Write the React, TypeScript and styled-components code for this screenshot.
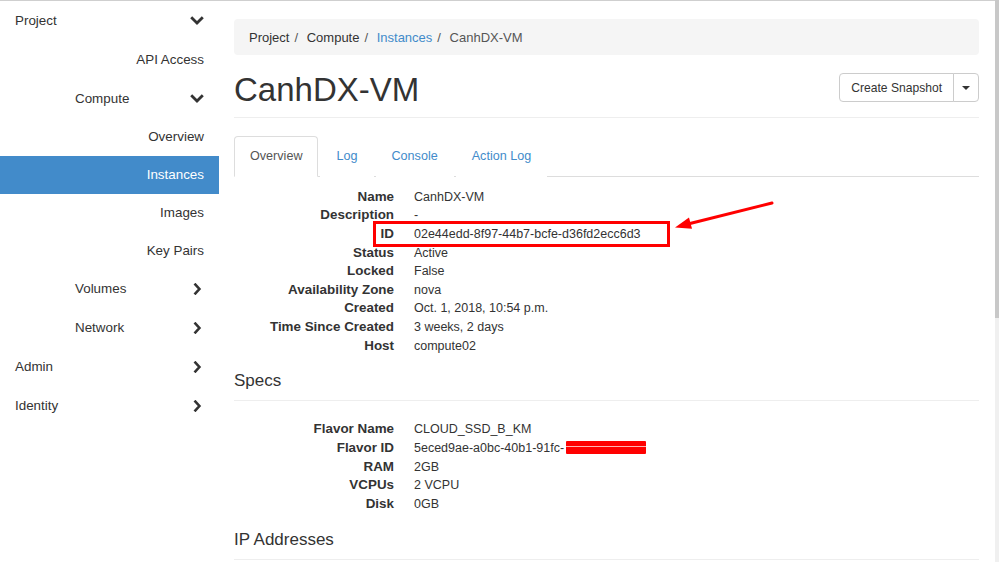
import React from 'react';
import styled, { createGlobalStyle } from 'styled-components';

const GlobalStyle = createGlobalStyle`
  html, body { margin: 0; padding: 0; height: 100%; overflow: hidden; background: #fff; }
  body { font-family: "Liberation Sans", Arial, sans-serif; color: #333; font-size: 13px; }
  * { box-sizing: border-box; }
  ul, dl, dd, h1, h4 { margin: 0; padding: 0; }
`;

const Screen = styled.div`
  position: relative;
  display: flex;
  width: 999px;
  height: 562px;
  overflow: hidden;
`;

const Page = styled.div`
  flex: 1;
  min-width: 0;
  display: flex;
  border-top: 1px solid #cfcfcf;
`;

const Scrollbar = styled.div`
  width: 4px;
  display: flex;
  flex-direction: column;
  background: #f0f0f0;
`;

const Thumb = styled.div`
  height: 318px;
  background: #c8c8c8;
`;

/* ---------- Sidebar ---------- */
const Sidebar = styled.nav`
  width: 219px;
  flex-shrink: 0;
  display: flex;
  flex-direction: column;
`;

type Level = 'top' | 'group' | 'leaf';

const NavItem = styled.div<{ $level: Level; $nested?: boolean; $active?: boolean }>`
  height: ${(p) => (p.$nested ? '37.75px' : '39px')};
  display: flex;
  align-items: center;
  font-size: 13.4px;
  color: ${(p) => (p.$active ? '#fff' : '#333')};
  background: ${(p) => (p.$active ? '#428bca' : 'transparent')};
  padding-right: 15px;
  padding-left: ${(p) => (p.$level === 'top' ? '15px' : p.$level === 'group' ? '75px' : '0')};
  justify-content: ${(p) => (p.$level === 'leaf' ? 'flex-end' : 'space-between')};
`;

const Chevron = styled.svg`
  width: 14px;
  height: 12px;
  flex-shrink: 0;
`;

const ChevronDown = () => (
  <Chevron viewBox="0 0 14 12">
    <polyline points="2.2,3.2 7,8 11.8,3.2" fill="none" stroke="#333" strokeWidth="2.8" strokeLinecap="square" />
  </Chevron>
);

const ChevronRight = () => (
  <Chevron viewBox="0 0 14 12">
    <polyline points="5.4,1.6 9.4,6 5.4,10.4" fill="none" stroke="#333" strokeWidth="2.6" strokeLinecap="square" />
  </Chevron>
);

/* ---------- Main ---------- */
const Main = styled.main`
  flex: 1;
  min-width: 0;
  padding: 18px 16px 0 15px;
  display: flex;
  flex-direction: column;
`;

const Breadcrumb = styled.ol`
  list-style: none;
  margin: 0;
  height: 36px;
  padding: 0 15px;
  background: #f5f5f5;
  border-radius: 4px;
  display: flex;
  align-items: center;
  font-size: 13px;
`;

const Crumb = styled.li<{ $link?: boolean; $current?: boolean }>`
  color: ${(p) => (p.$link ? '#428bca' : p.$current ? '#555' : '#333')};
`;

const Sep = styled.li`
  padding: 0 5px;
  color: #555;
  white-space: pre;
`;

const Header = styled.div`
  margin-top: 18px;
  height: 45px;
  border-bottom: 1px solid #eee;
  display: flex;
  justify-content: space-between;
  align-items: flex-start;
`;

const Title = styled.h1`
  font-size: 33px;
  line-height: 34px;
  font-weight: normal;
  color: #333;
  margin: 0;
`;

const ButtonGroup = styled.div`
  display: flex;
  height: 29px;
`;

const Button = styled.button<{ $caret?: boolean }>`
  font-family: inherit;
  font-size: 12.1px;
  color: #333;
  background: #fff;
  border: 1px solid #ccc;
  height: 29px;
  padding: ${(p) => (p.$caret ? '0' : '0 11px')};
  width: ${(p) => (p.$caret ? '26px' : 'auto')};
  margin-left: ${(p) => (p.$caret ? '-1px' : '0')};
  border-radius: ${(p) => (p.$caret ? '0 4px 4px 0' : '4px 0 0 4px')};
  display: flex;
  align-items: center;
  justify-content: center;
`;

const Caret = styled.span`
  width: 0;
  height: 0;
  border-left: 4px solid transparent;
  border-right: 4px solid transparent;
  border-top: 4px solid #333;
`;

const Tabs = styled.ul`
  list-style: none;
  margin-top: 18px;
  display: flex;
  border-bottom: 1px solid #ddd;
`;

const Tab = styled.li<{ $active?: boolean }>`
  margin-right: 2px;
  margin-bottom: -1px;
  padding: 10px 15px;
  line-height: 18.6px;
  font-size: 12.6px;
  border: 1px solid ${(p) => (p.$active ? '#ddd' : 'transparent')};
  border-bottom-color: ${(p) => (p.$active ? '#fff' : 'transparent')};
  border-radius: 4px 4px 0 0;
  background: #fff;
  color: ${(p) => (p.$active ? '#555' : '#428bca')};
`;

const Details = styled.dl<{ $top: number }>`
  margin-top: ${(p) => p.$top}px;
  display: grid;
  grid-template-columns: 160px 1fr;
  grid-auto-rows: 18.65px;
  column-gap: 20px;
  line-height: 18.65px;
`;

const Term = styled.dt`
  text-align: right;
  font-weight: bold;
  font-size: 13.4px;
  white-space: nowrap;
`;

const Desc = styled.dd`
  font-size: 12.5px;
  white-space: nowrap;
`;

const Redacted = styled.span`
  display: inline-block;
  width: 80px;
  height: 13px;
  margin-left: 2px;
  vertical-align: -2px;
  background: linear-gradient(#f00 0 5px, #ffb3b3 5px 6px, #f00 6px);
  border-radius: 1px;
`;

const SectionTitle = styled.h4`
  margin-top: 15px;
  font-size: 17px;
  line-height: 22px;
  padding-bottom: 8px;
  font-weight: normal;
  border-bottom: 1px solid #eee;
  color: #333;
`;

/* ---------- Annotation overlay ---------- */
const Highlight = styled.div`
  position: absolute;
  left: 373px;
  top: 221px;
  width: 297px;
  height: 26px;
  border: 3px solid #f00;
  pointer-events: none;
`;

const ArrowLayer = styled.svg`
  position: absolute;
  left: 0;
  top: 0;
  width: 999px;
  height: 562px;
  pointer-events: none;
`;

const nav: { label: string; level: Level; nested?: boolean; icon?: 'down' | 'right'; active?: boolean }[] = [
  { label: 'Project', level: 'top', icon: 'down' },
  { label: 'API Access', level: 'leaf' },
  { label: 'Compute', level: 'group', icon: 'down' },
  { label: 'Overview', level: 'leaf', nested: true },
  { label: 'Instances', level: 'leaf', nested: true, active: true },
  { label: 'Images', level: 'leaf', nested: true },
  { label: 'Key Pairs', level: 'leaf', nested: true },
  { label: 'Volumes', level: 'group', icon: 'right' },
  { label: 'Network', level: 'group', icon: 'right' },
  { label: 'Admin', level: 'top', icon: 'right' },
  { label: 'Identity', level: 'top', icon: 'right' },
];

const overview: [string, string][] = [
  ['Name', 'CanhDX-VM'],
  ['Description', '-'],
  ['ID', '02e44edd-8f97-44b7-bcfe-d36fd2ecc6d3'],
  ['Status', 'Active'],
  ['Locked', 'False'],
  ['Availability Zone', 'nova'],
  ['Created', 'Oct. 1, 2018, 10:54 p.m.'],
  ['Time Since Created', '3 weeks, 2 days'],
  ['Host', 'compute02'],
];

export default function App() {
  return (
    <>
      <GlobalStyle />
      <Screen>
        <Page>
          <Sidebar>
            {nav.map((n) => (
              <NavItem key={n.label} $level={n.level} $nested={n.nested} $active={n.active}>
                <span>{n.label}</span>
                {n.icon === 'down' && <ChevronDown />}
                {n.icon === 'right' && <ChevronRight />}
              </NavItem>
            ))}
          </Sidebar>
          <Main>
            <Breadcrumb>
              <Crumb>Project</Crumb>
              <Sep>{'/\u00a0'}</Sep>
              <Crumb>Compute</Crumb>
              <Sep>{'/\u00a0'}</Sep>
              <Crumb $link>Instances</Crumb>
              <Sep>{'/\u00a0'}</Sep>
              <Crumb $current>CanhDX-VM</Crumb>
            </Breadcrumb>
            <Header>
              <Title>CanhDX-VM</Title>
              <ButtonGroup>
                <Button>Create Snapshot</Button>
                <Button $caret>
                  <Caret />
                </Button>
              </ButtonGroup>
            </Header>
            <Tabs>
              <Tab $active>Overview</Tab>
              <Tab>Log</Tab>
              <Tab>Console</Tab>
              <Tab>Action Log</Tab>
            </Tabs>
            <Details $top={11}>
              {overview.map(([k, v]) => (
                <React.Fragment key={k}>
                  <Term>{k}</Term>
                  <Desc>{v}</Desc>
                </React.Fragment>
              ))}
            </Details>
            <SectionTitle>Specs</SectionTitle>
            <Details $top={19}>
              <Term>Flavor Name</Term>
              <Desc>CLOUD_SSD_B_KM</Desc>
              <Term>Flavor ID</Term>
              <Desc>
                5eced9ae-a0bc-40b1-91fc-
                <Redacted />
              </Desc>
              <Term>RAM</Term>
              <Desc>2GB</Desc>
              <Term>VCPUs</Term>
              <Desc>2 VCPU</Desc>
              <Term>Disk</Term>
              <Desc>0GB</Desc>
            </Details>
            <SectionTitle>IP Addresses</SectionTitle>
          </Main>
        </Page>
        <Scrollbar>
          <Thumb />
        </Scrollbar>
        <Highlight />
        <ArrowLayer viewBox="0 0 999 562">
          <line x1="772" y1="203" x2="688" y2="224" stroke="#f00" strokeWidth="3" strokeLinecap="round" />
          <polygon points="675,227.5 689,217.6 692,228.8" fill="#f00" />
        </ArrowLayer>
      </Screen>
    </>
  );
}
